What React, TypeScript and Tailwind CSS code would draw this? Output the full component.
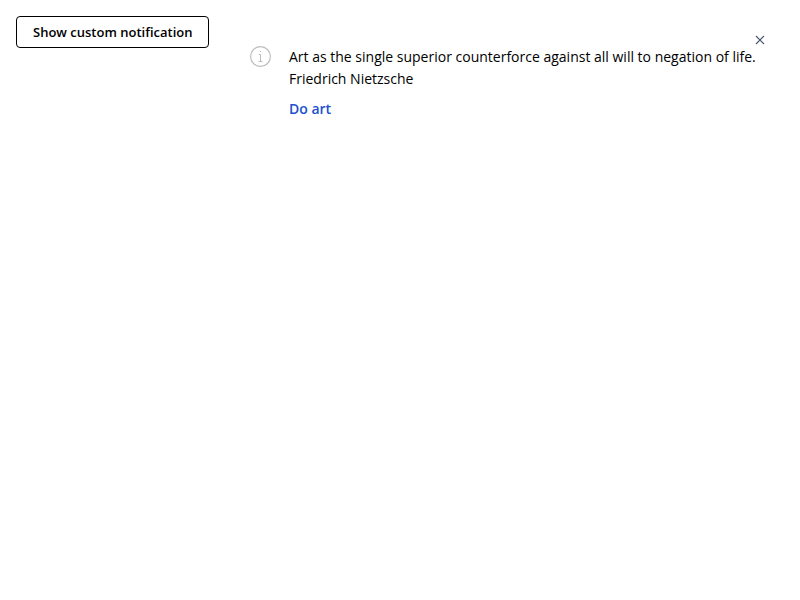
export default function App() {
  return (
    <main className="flex h-[600px] w-[800px] items-start bg-white font-['Open_Sans',sans-serif] text-black antialiased">
      <button className="mt-4 ml-4 h-8 w-[193px] shrink-0 rounded border border-black px-4 text-left text-[13px] leading-5 font-semibold whitespace-nowrap">
        Show custom notification
      </button>
      <section className="relative mt-[46px] ml-[41px] flex w-[520px] items-start">
        <svg className="size-[21px] shrink-0" viewBox="0 0 21 21" fill="none" stroke="#bbbdc0">
          <circle cx="10.5" cy="10.5" r="9.9" strokeWidth="1.15" />
          <path d="M8.7 8.5h1.8v6.5M8.5 15.5h4M10 5.5h1" />
        </svg>
        <div className="ml-[18px] text-sm leading-[22px] whitespace-nowrap">
          <p>Art as the single superior counterforce against all will to negation of life.</p>
          <p>Friedrich Nietzsche</p>
          <button className="mt-2 block font-semibold text-[#2050d0]">Do art</button>
        </div>
        <button aria-label="Close" className="absolute top-[-11px] left-[505px]">
          <svg className="size-[10px]" viewBox="0 0 10 10" fill="none" stroke="#4c5773" strokeWidth="1.15">
            <path d="M1 1l8 8M9 1l-8 8" />
          </svg>
        </button>
      </section>
    </main>
  );
}
